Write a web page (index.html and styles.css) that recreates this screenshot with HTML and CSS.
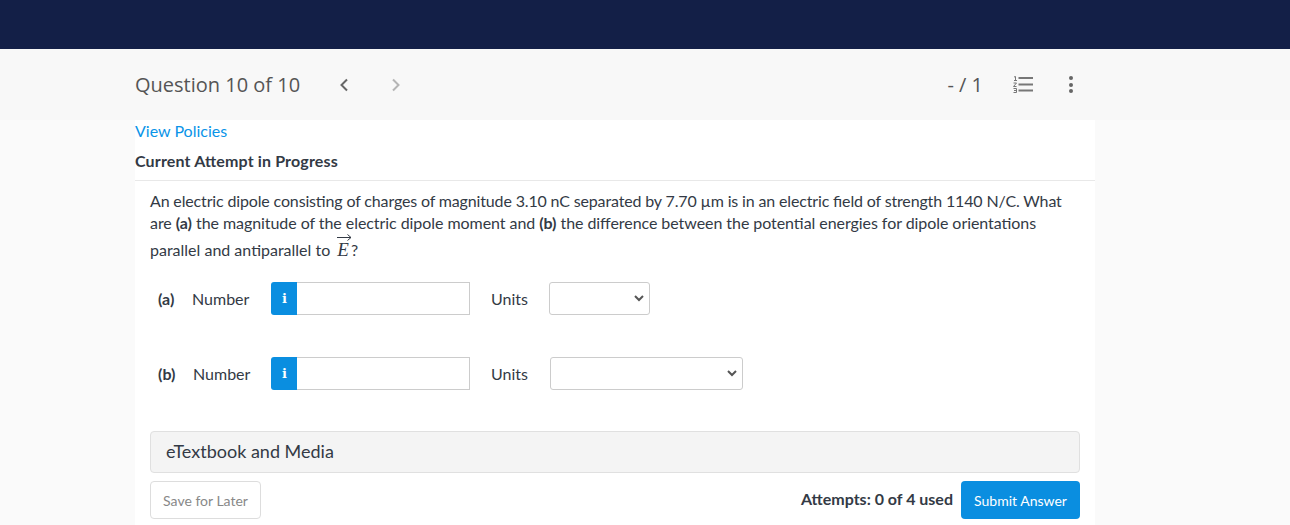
FILE: index.html
```html
<!DOCTYPE html>
<html lang="en">
<head>
  <meta charset="UTF-8">
  <title>Question 10 of 10</title>
  <link rel="stylesheet" href="styles.css">
</head>
<body>

  <div class="topbar"></div>

  <div class="qhead">
    <div class="qhead-inner">
      <span class="qtitle">Question 10 of 10</span>
      <button class="nav-btn">
        <svg width="10" height="14" viewBox="0 0 10 14"><path d="M8 1.500 2.500 7 8 12.500" fill="none" stroke="#666" stroke-width="2"/></svg>
      </button>
      <button class="nav-btn off">
        <svg width="10" height="14" viewBox="0 0 10 14"><path d="M2 1.500 7.500 7 2 12.500" fill="none" stroke="#b5b5b5" stroke-width="2"/></svg>
      </button>
      <span class="score">- / 1</span>
      <svg class="list-icon" width="20" height="17" viewBox="0 0 20 17">
        <path d="M1 1 2.500.5V4.500M1 4.500H4M.5 7H3.500L.5 10.500H3.500M.5 12.500H3.500V16.500H.5M1 14.500H3.500" fill="none" stroke="#777" stroke-width="1"/>
        <path d="M5.500 2H20M5.500 8.500H20M5.500 14.500H20" fill="none" stroke="#777" stroke-width="2"/>
      </svg>
      <span class="dots"><i></i><i></i><i></i></span>
    </div>
  </div>

  <div class="page">
    <a class="policies" href="#">View Policies</a>
    <div class="attempt-title">Current Attempt in Progress</div>

    <div class="question">
      <p class="qtext"><span class="line-one">An electric dipole consisting of charges of magnitude 3.10 nC separated by 7.70 µm is in an electric field of strength 1140 N/C. What</span> <span class="line-two">are <b>(a)</b> the magnitude of the electric dipole moment and <b>(b)</b> the difference between the potential energies for dipole orientations</span> parallel and antiparallel to <span class="vec">E<svg class="vec-arrow" width="15" height="7" viewBox="0 0 15 7"><path d="M0 3.500H14M10.500 .5 14 3.500 10.500 6.500" fill="none" stroke="#333a45" stroke-width="1"/></svg></span>?</p>

      <div class="answer first">
        <b class="part">(a)</b>
        <span class="lbl">Number</span>
        <span class="info">i</span>
        <input class="num" type="text">
        <span class="lbl units">Units</span>
        <select class="unit-sel small"></select>
      </div>

      <div class="answer">
        <b class="part">(b)</b>
        <span class="lbl">Number</span>
        <span class="info">i</span>
        <input class="num" type="text">
        <span class="lbl units">Units</span>
        <select class="unit-sel big"></select>
      </div>

      <div class="media">eTextbook and Media</div>

      <div class="actions">
        <button class="save">Save for Later</button>
        <span class="attempts">Attempts: 0 of 4 used</span>
        <button class="submit">Submit Answer</button>
      </div>
    </div>
  </div>

</body>
</html>
```

FILE: styles.css
```css
* {
  box-sizing: border-box;
}

html, body {
  height: 525px;
  overflow: hidden;
}

body {
  margin: 0;
  background: #fafafa;
  font-family: "Lato", sans-serif;
  color: #333a45;
}

.topbar {
  height: 49px;
  background: #131f47;
}

.qhead {
  height: 71px;
  background: #f8f8f8;
}

.qhead-inner {
  width: 960px;
  margin-left: 135px;
  height: 71px;
  display: flex;
  align-items: center;
}

.qtitle {
  font-family: "Open Sans", sans-serif;
  font-size: 20px;
  color: #555;
  width: 204px;
}

.nav-btn {
  width: 52px;
  padding: 0;
  border: none;
  background: none;
  display: flex;
}

.score {
  margin-left: auto;
  font-family: "Open Sans", sans-serif;
  font-size: 20px;
  color: #555;
}

.list-icon {
  margin-left: 30px;
}

.dots {
  display: flex;
  flex-direction: column;
  gap: 2.500px;
  margin-left: 36px;
  margin-right: 22px;
}

.dots i {
  width: 4px;
  height: 4px;
  border-radius: 50%;
  background: #666;
}

.page {
  width: 960px;
  margin-left: 135px;
  height: 405px;
  background: #fff;
}

.policies {
  display: block;
  padding-top: 1px;
  font-size: 16px;
  line-height: 20px;
  color: #0a94e8;
  text-decoration: none;
}

.attempt-title {
  margin-top: 10px;
  height: 30px;
  font-size: 16px;
  font-weight: 700;
  line-height: 20px;
  letter-spacing: 0.150px;
  font-feature-settings: "liga" 1;
  border-bottom: 1px solid #e8e8e8;
}

.question {
  padding: 0 15px;
}

.qtext {
  margin: 9px 0 0;
  font-size: 16px;
  line-height: 22px;
  font-feature-settings: "liga" 1;
}

.line-one {
  letter-spacing: -0.150px;
}

.line-two {
  letter-spacing: -0.060px;
}

.vec {
  position: relative;
  display: inline-block;
  padding: 5px 2px 0 3px;
  font-family: "Liberation Serif", serif;
  font-style: italic;
  font-size: 19px;
}

.vec-arrow {
  position: absolute;
  top: 0;
  left: 3px;
}

.answer {
  display: flex;
  align-items: center;
  height: 33px;
  margin-top: 42px;
  padding-left: 8px;
  font-size: 16px;
}

.answer.first {
  margin-top: 21px;
}

.part {
  width: 35px;
  font-weight: 700;
}

.first .part {
  width: 34px;
}

.lbl {
  width: 78px;
}

.first .lbl {
  width: 79px;
}

.info {
  display: flex;
  align-items: center;
  justify-content: center;
  width: 26px;
  height: 33px;
  padding-left: 1px;
  background: #0a8ee0;
  border-radius: 3px 0 0 3px;
  color: #fff;
  font-family: "DejaVu Serif", serif;
  font-weight: 700;
  font-size: 13px;
}

.num {
  width: 173px;
  height: 33px;
  border: 1px solid #ccc;
  border-left: none;
  background: #fff;
}

.units,
.first .units {
  width: 58px;
  margin-left: 21px;
}

.answer:not(.first) .units {
  width: 59px;
}

.unit-sel {
  appearance: none;
  height: 33px;
  border: 1px solid #ccc;
  border-radius: 3px;
  background: #fff url("data:image/svg+xml,%3Csvg xmlns='http://www.w3.org/2000/svg' width='10' height='7'%3E%3Cpath d='M1 1l4 4 4-4' fill='none' stroke='%23555' stroke-width='2'/%3E%3C/svg%3E") no-repeat right 5px center;
  color: #333;
}

.unit-sel.small {
  width: 101px;
}

.unit-sel.big {
  width: 193px;
}

.media {
  height: 42px;
  margin-top: 41px;
  padding-left: 15px;
  background: #f4f4f4;
  border: 1px solid #e0e0e0;
  border-radius: 4px;
  font-size: 18px;
  line-height: 39px;
}

.actions {
  display: flex;
  align-items: center;
  margin-top: 8px;
}

.save {
  width: 111px;
  height: 38px;
  background: #fff;
  border: 1px solid #ddd;
  border-radius: 4px;
  font-family: "Lato", sans-serif;
  font-size: 14px;
  color: #888;
}

.attempts {
  margin-left: auto;
  margin-right: 8px;
  margin-top: -4px;
  font-size: 16px;
  font-weight: 700;
}

.submit {
  width: 119px;
  height: 38px;
  background: #0a8ee0;
  border: none;
  border-radius: 4px;
  color: #fff;
  font-family: "Lato", sans-serif;
  font-size: 14px;
}
```
